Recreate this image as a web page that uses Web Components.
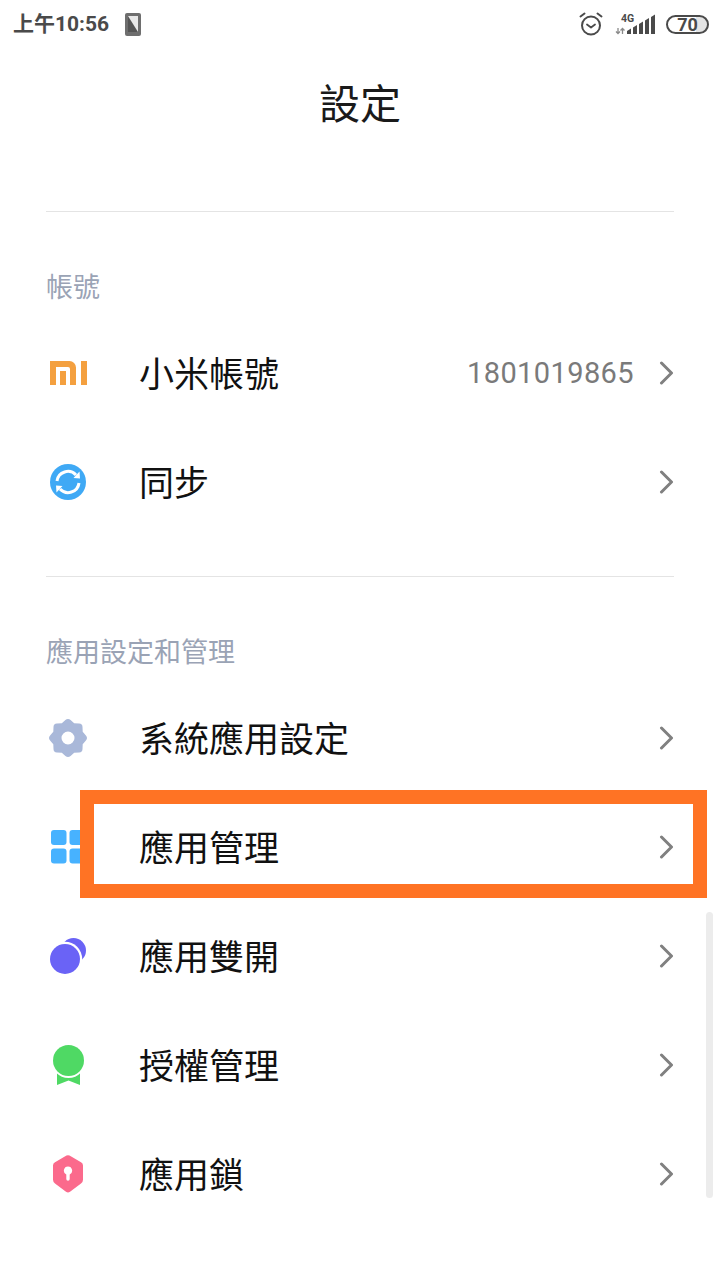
<!DOCTYPE html>
<html lang="zh-Hant">
<head>
<meta charset="utf-8">
<title>設定</title>
<style>
  html, body { margin: 0; padding: 0; background: #fff; }
  body {
    width: 720px;
    height: 1280px;
    overflow: hidden;
    position: relative;
    font-family: Roboto, "Noto Sans CJK TC", sans-serif;
    color: #111;
  }
</style>
</head>
<body>
<status-bar></status-bar>
<page-title>設定</page-title>
<settings-section label="帳號">
  <setting-row label="小米帳號" value="1801019865">
    <svg slot="icon" viewBox="0 0 37 24" width="37" height="24">
      <path fill="#f4a03f" d="M0 0h19.500a6.500 6.500 0 0 1 6.500 6.500V24h-6V8a2 2 0 0 0-2-2H6v18H0z"/>
      <path fill="#f4a03f" d="M10 10h6v14h-6zM31 0h6v24h-6z"/>
    </svg>
  </setting-row>
  <setting-row label="同步">
    <svg slot="icon" viewBox="0 0 36 36" width="36" height="36">
      <circle cx="18" cy="18" r="18" fill="#3fa9f5"/>
      <path fill="none" stroke="#fff" stroke-width="3" d="M7 17a11 11 0 0 1 19-6"/>
      <path fill="#fff" d="M23.500 14l6.500.5-.5-7z"/>
      <path fill="none" stroke="#fff" stroke-width="3" d="M29 19a11 11 0 0 1-19 6"/>
      <path fill="#fff" d="M12.500 22l-6.500-.5.500 7z"/>
    </svg>
  </setting-row>
</settings-section>
<settings-section label="應用設定和管理">
  <setting-row label="系統應用設定">
    <svg slot="icon" viewBox="0 0 38 38" width="38" height="38">
      <path fill="#a9b8d9" fill-rule="evenodd" d="M19 0q1.500 0 2.600 1.100l3.600 3.200 4.900.2q3.400.1 3.400 3.400l.2 4.900 3.200 3.600q2.200 2.600 0 5.200l-3.200 3.600-.2 4.900q0 3.300-3.400 3.400l-4.900.2-3.600 3.200q-2.600 2.200-5.200 0l-3.600-3.200-4.900-.2q-3.400-.1-3.400-3.400l-.2-4.900-3.200-3.600q-2.200-2.600 0-5.200l3.200-3.600.2-4.900q0-3.300 3.400-3.400l4.900-.2 3.600-3.200Q17.500 0 19 0zm0 12.500a6.500 6.500 0 1 0 0 13 6.500 6.500 0 0 0 0-13z"/>
    </svg>
  </setting-row>
  <setting-row label="應用管理">
    <svg slot="icon" viewBox="0 0 34 34" width="34" height="34">
      <rect x="0" y="0" width="15.500" height="15" rx="3" fill="#47b2ff"/>
      <rect x="18.500" y="0" width="15.500" height="15" rx="3" fill="#47b2ff"/>
      <rect x="0" y="18.500" width="15.500" height="15" rx="3" fill="#47b2ff"/>
      <rect x="18.500" y="18.500" width="15.500" height="15" rx="3" fill="#47b2ff"/>
    </svg>
  </setting-row>
  <setting-row label="應用雙開">
    <svg slot="icon" viewBox="0 0 36 36" width="36" height="36">
      <circle cx="23.500" cy="12.500" r="12.500" fill="#6a63f6"/>
      <circle cx="15" cy="21" r="17.200" fill="#fff"/>
      <circle cx="15" cy="21" r="15" fill="#6a63f6"/>
    </svg>
  </setting-row>
  <setting-row label="授權管理">
    <svg slot="icon" viewBox="0 0 31 40" width="31" height="40">
      <path fill="#4fd964" d="M4 27h23v13l-11.500-4.500L4 40z"/>
      <circle cx="15.500" cy="15.500" r="17.500" fill="#fff"/>
      <circle cx="15.500" cy="15.500" r="15.500" fill="#4fd964"/>
    </svg>
  </setting-row>
  <setting-row label="應用鎖">
    <svg slot="icon" viewBox="0 0 30 38" width="30" height="38">
      <path fill="#fb6a8c" fill-rule="evenodd" d="M13.500.6q1.500-.8 3 0L28 7.200q2 1 2 3.300v14.300q0 2.300-2 3.600L17 36.800q-2 1.300-4 0L2 28.400Q0 27.100 0 24.800V10.500q0-2.300 2-3.300zM15 11.500a4.200 4.200 0 0 0-1.700 8V24a1.700 1.700 0 0 0 3.400 0v-4.500a4.200 4.200 0 0 0-1.700-8z"/>
    </svg>
  </setting-row>
</settings-section>
<highlight-box></highlight-box>
<scroll-indicator></scroll-indicator>

<script>
// top status bar, icons are all inline
class StatusBar extends HTMLElement {
  constructor() {
    super();
    this.attachShadow({ mode: 'open' }).innerHTML = `
      <style>
        :host {
          display: flex;
          align-items: center;
          justify-content: space-between;
          height: 48px;
          padding: 0 11px 0 13px;
          color: #4a4a4a;
          font-family: Roboto, "Noto Sans CJK TC", sans-serif;
        }
        .left, .right { display: flex; align-items: center; }
        .time { font-size: 21px; font-weight: 700; line-height: 47px; }
        .sim { margin-left: 16px; display: block; }
        .alarm { display: block; margin-right: 12px; }
        .net { display: block; margin-right: 10px; }
        .net text { font: 700 10.500px Roboto, sans-serif; fill: #4a4a4a; }
        .battery {
          box-sizing: border-box;
          width: 43px;
          height: 19px;
          border: 2px solid #4a4a4a;
          border-radius: 10px;
          background: linear-gradient(90deg, #fff 0 72%, #e4e4e4 72% 100%);
          display: flex;
          align-items: center;
          justify-content: center;
          font-size: 18px;
          font-weight: 700;
          line-height: 15px;
        }
      </style>
      <div class="left">
        <span class="time">上午10:56</span>
        <svg class="sim" viewBox="0 0 16 23" width="16" height="23">
          <rect x="0" y="0" width="16" height="23" rx="2" fill="#6e6e6e"/>
          <path fill="#e8e8e8" d="M3 3h10v16H3z"/>
          <path fill="#555" d="M3 3l10 16H3z"/>
        </svg>
      </div>
      <div class="right">
        <svg class="alarm" viewBox="0 0 24 24" width="24" height="24" fill="none" stroke="#4a4a4a" stroke-width="2">
          <circle cx="12" cy="13.500" r="9"/>
          <path stroke-linecap="round" d="M1.500 4.500l4-3M22.500 4.500l-4-3"/>
          <path stroke-linecap="round" stroke-linejoin="round" stroke-width="1.800" d="M8 12.500l4 3 4-3"/>
        </svg>
        <svg class="net" viewBox="0 0 41 22" width="41" height="22">
          <text x="6" y="9">4G</text>
          <path stroke="#8a8a8a" stroke-width="1.300" fill="none" d="M3 15v5.500M1 18.500l2 2 2-2M7.500 21v-5.500M5.500 17.500l2-2 2 2"/>
          <path fill="#4a4a4a" d="M12 21v-3l4-2.500V21zM18 21v-6.500l4-2.500v9zM24 21V11l4-2.500V21zM30 21V7.500l4-2.500v16zM36 21V4l4-2.500V21z"/>
        </svg>
        <div class="battery">70</div>
      </div>
    `;
  }
}

class PageTitle extends HTMLElement {
  constructor() {
    super();
    this.attachShadow({ mode: 'open' }).innerHTML = `
      <style>
        :host {
          display: block;
          height: 163px;
          box-sizing: border-box;
          padding-top: 24px;
          text-align: center;
          font-family: "Noto Sans CJK TC", sans-serif;
          font-size: 41px;
          line-height: 58px;
          color: #1a1a1a;
        }
      </style>
      <slot></slot>
    `;
  }
}

class SettingsSection extends HTMLElement {
  constructor() {
    super();
    this.attachShadow({ mode: 'open' }).innerHTML = `
      <style>
        :host {
          display: block;
          margin: 0 46px;
          border-top: 1px solid #e4e4e4;
          padding-top: 54px;
          height: 310px;
        }
        :host(:last-of-type) { height: auto; }
        .label {
          font-family: "Noto Sans CJK TC", sans-serif;
          font-size: 27px;
          line-height: 40px;
          color: #9aa3b5;
        }
        .rows { margin-top: 12px; }
      </style>
      <div class="label"></div>
      <div class="rows"><slot></slot></div>
    `;
    this.shadowRoot.querySelector('.label').textContent = this.getAttribute('label');
  }
}

class SettingRow extends HTMLElement {
  constructor() {
    super();
    this.attachShadow({ mode: 'open' }).innerHTML = `
      <style>
        :host {
          display: flex;
          align-items: center;
          height: 109px;
        }
        .icon {
          width: 44px;
          flex: none;
          display: flex;
          justify-content: center;
          margin-right: 49px;
        }
        .label {
          flex: 1;
          font-family: "Noto Sans CJK TC", sans-serif;
          font-size: 35px;
          line-height: 50px;
          padding-bottom: 2px;
          color: #111;
        }
        .value {
          font-family: Roboto, sans-serif;
          font-size: 29px;
          letter-spacing: 0.400px;
          color: #7a7a7a;
          margin-right: 25px;
        }
        .chevron { display: block; flex: none; }
      </style>
      <div class="icon"><slot name="icon"></slot></div>
      <div class="label"></div>
      <div class="value"></div>
      <svg class="chevron" viewBox="0 0 15 24" width="15" height="24" fill="none" stroke="#808080" stroke-width="3" stroke-linecap="round" stroke-linejoin="round">
        <path d="M2.500 2l10 10-10 10"/>
      </svg>
    `;
    this.shadowRoot.querySelector('.label').textContent = this.getAttribute('label');
    this.shadowRoot.querySelector('.value').textContent = this.getAttribute('value') || '';
  }
}

// orange annotation drawn on top of the screenshot
class HighlightBox extends HTMLElement {
  constructor() {
    super();
    this.attachShadow({ mode: 'open' }).innerHTML = `
      <style>
        :host {
          position: absolute;
          left: 80px;
          top: 790px;
          width: 627px;
          height: 108px;
          box-sizing: border-box;
          border: 14px solid #ff7324;
        }
      </style>
    `;
  }
}

class ScrollIndicator extends HTMLElement {
  constructor() {
    super();
    this.attachShadow({ mode: 'open' }).innerHTML = `
      <style>
        :host {
          position: absolute;
          left: 706px;
          top: 912px;
          width: 7px;
          height: 286px;
          border-radius: 4px;
          background: #ececec;
        }
      </style>
    `;
  }
}

customElements.define('status-bar', StatusBar);
customElements.define('page-title', PageTitle);
customElements.define('settings-section', SettingsSection);
customElements.define('setting-row', SettingRow);
customElements.define('highlight-box', HighlightBox);
customElements.define('scroll-indicator', ScrollIndicator);
</script>
</body>
</html>
